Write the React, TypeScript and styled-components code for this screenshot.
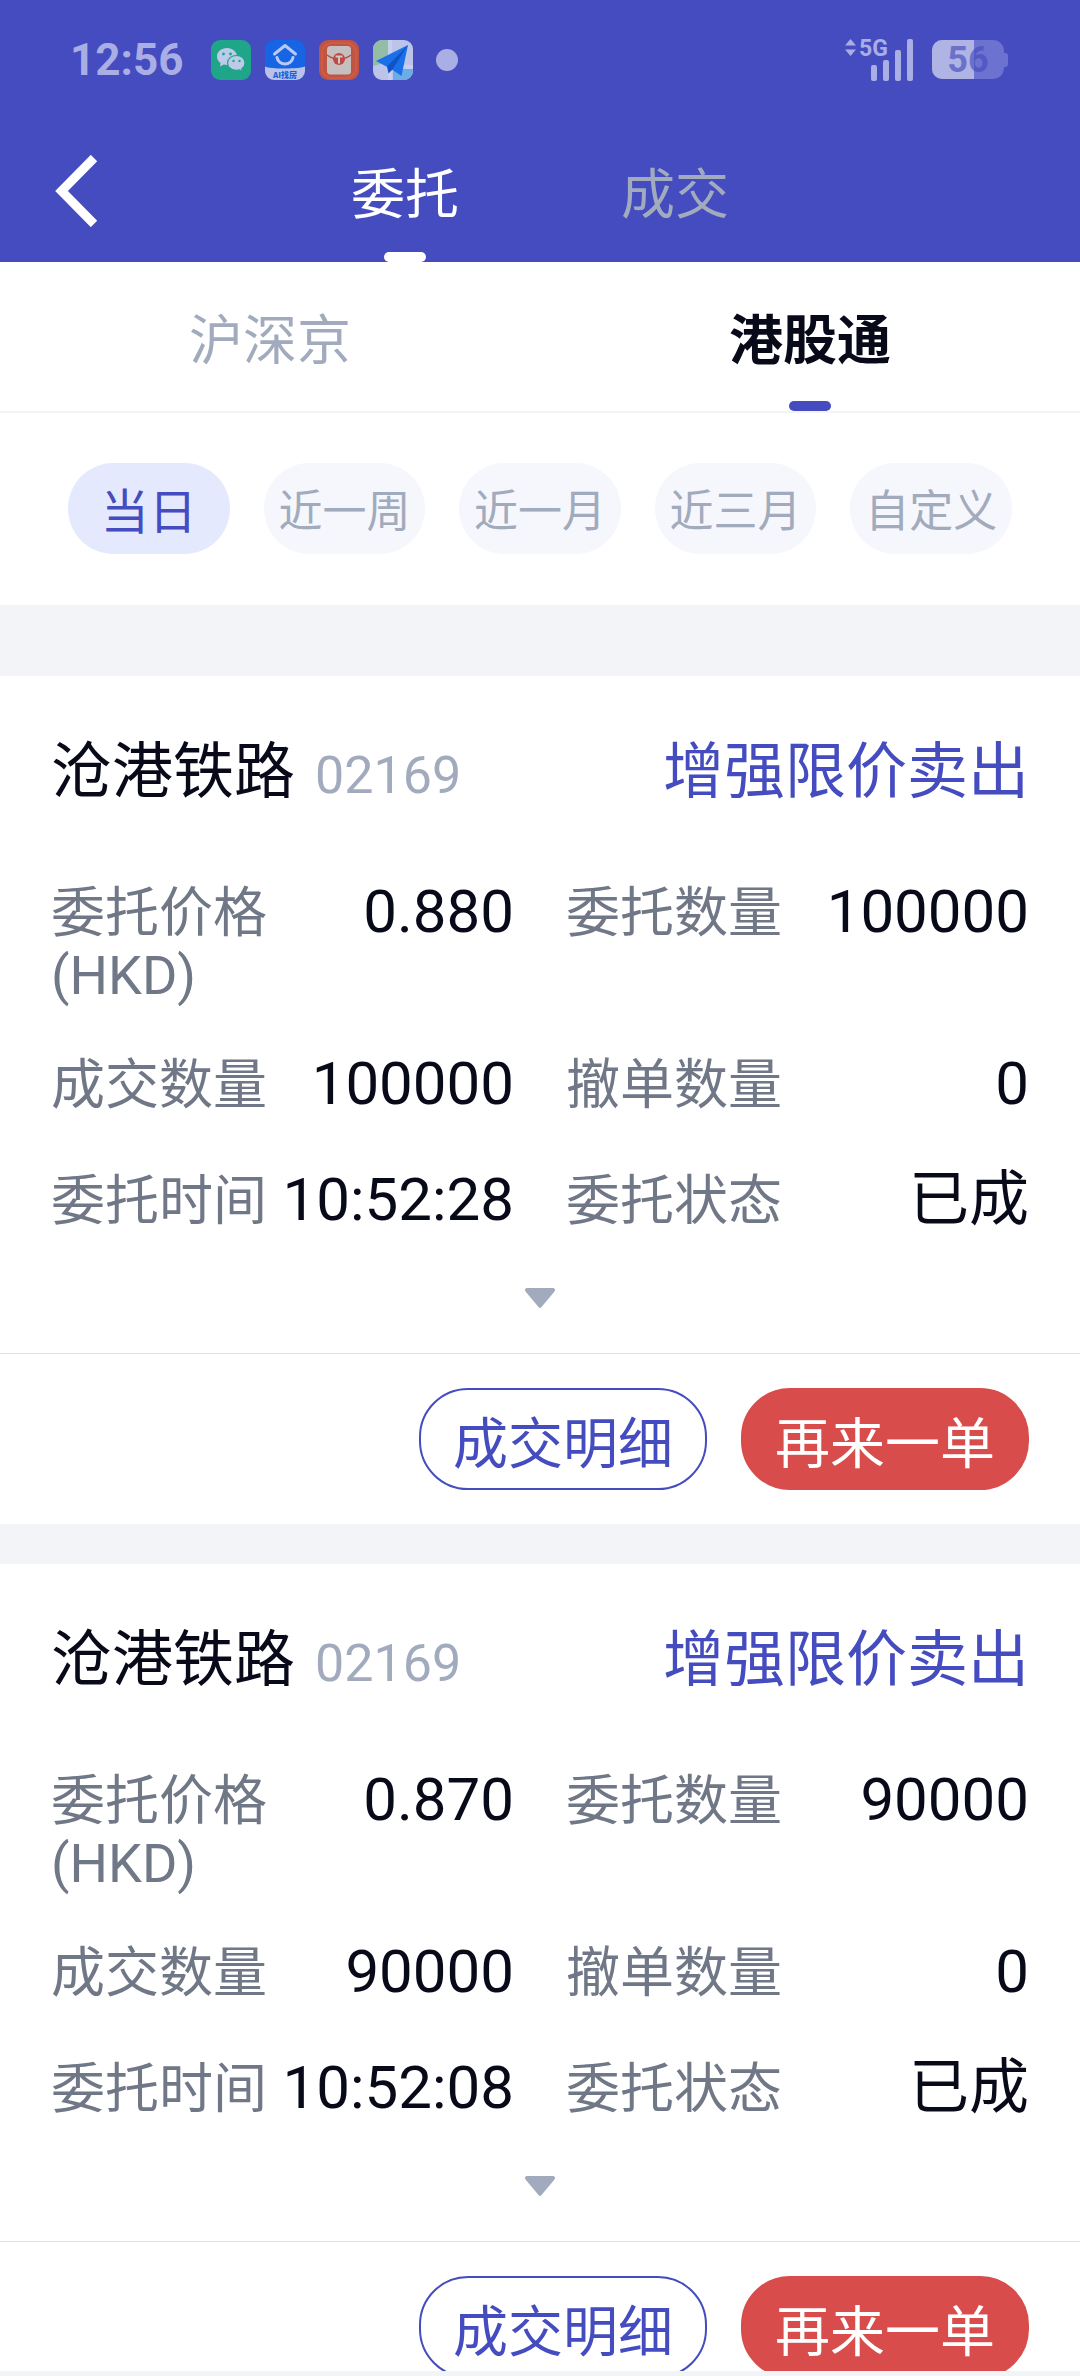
import React, { useState } from "react";
import styled, { createGlobalStyle } from "styled-components";

const cjk = '"Noto Sans CJK SC", "Noto Sans", sans-serif';
const latin = 'Roboto, "Noto Sans CJK SC", sans-serif';

const color = {
  brand: "#444cbf",
  ink: "#080a1a",
  label: "#707786",
  muted: "#a2abbd",
  surface: "#f2f4f7",
  pill: "#f5f7fc",
  pillActive: "#e4e9fe",
  line: "#e1e4e6",
  red: "#d84c4b",
  status: "#a9aee4",
};

const GlobalStyle = createGlobalStyle`
  * { box-sizing: border-box; }
  html, body { margin: 0; padding: 0; }
  body { background: ${color.surface}; font-family: ${cjk}; color: ${color.ink}; }
  button { font: inherit; border: 0; padding: 0; margin: 0; background: none; cursor: pointer; }
  svg { display: block; flex: none; }
`;

const Screen = styled.div`
  display: flex;
  flex-direction: column;
  height: 100vh;
`;

const Header = styled.header`
  flex: none;
  background: ${color.brand};
`;

const StatusBar = styled.div`
  display: flex;
  align-items: center;
  justify-content: space-between;
  height: 120px;
  padding: 0 72px 0 70px;
`;

const StatusGroup = styled.div<{ $gap: number }>`
  display: flex;
  align-items: center;
  gap: ${(p) => p.$gap}px;
`;

const Clock = styled.time`
  margin-right: 14px;
  font: 700 44px/60px ${latin};
  color: ${color.status};
`;

const Dot = styled.span`
  width: 22px;
  height: 22px;
  margin-left: 9px;
  border-radius: 50%;
  background: ${color.status};
`;

const NavBar = styled.nav`
  display: grid;
  grid-template-columns: 1fr 2fr 1fr;
  height: 142px;
`;

const BackButton = styled.button`
  display: flex;
  align-items: center;
  padding-left: 54px;
`;

const Tabs = styled.div`
  display: flex;
`;

const Tab = styled.button<{ $tone: string; $bar: string; $bold?: boolean }>`
  position: relative;
  flex: 1;
  font-size: 54px;
  line-height: 64px;
  font-weight: ${(p) => (p.$bold ? 700 : 400)};
  color: ${(p) => p.$tone};

  &[aria-selected="true"]::after {
    content: "";
    position: absolute;
    left: 50%;
    bottom: 0;
    width: 42px;
    height: 10px;
    margin-left: -21px;
    border-radius: 5px;
    background: ${(p) => p.$bar};
  }
`;

const MarketTabs = styled.div`
  display: flex;
  flex: none;
  height: 151px;
  background: #fff;
  border-bottom: 2px solid ${color.surface};
`;

const Filters = styled.div`
  display: flex;
  flex: none;
  gap: 34px;
  padding: 50px 68px 51px;
  background: #fff;
`;

const Pill = styled.button<{ $active: boolean }>`
  flex: 1;
  height: 91px;
  padding-bottom: 2px;
  border-radius: 46px;
  white-space: nowrap;
  line-height: 64px;
  font-size: ${(p) => (p.$active ? 48 : 44)}px;
  color: ${(p) => (p.$active ? color.brand : color.muted)};
  background: ${(p) => (p.$active ? color.pillActive : color.pill)};
`;

const OrderList = styled.main`
  flex: 1;
  min-height: 0;
  display: flex;
  flex-direction: column;
  gap: 40px;
  padding-top: 71px;
  overflow-y: auto;
  scrollbar-width: none;
`;

const Card = styled.article`
  flex: none;
  background: #fff;
`;

const CardHead = styled.div`
  display: flex;
  align-items: baseline;
  justify-content: space-between;
  height: 138px;
  padding: 46px 51px 0;
`;

const StockName = styled.h2`
  margin: 0;
  font-weight: 400;
  font-size: 61px;
  line-height: 90px;
`;

const StockCode = styled.span`
  margin-left: 20px;
  font-family: ${latin};
  font-size: 52px;
  color: ${color.muted};
`;

const OrderType = styled.span`
  font-size: 61px;
  line-height: 90px;
  color: ${color.brand};
`;

const Fields = styled.dl`
  display: grid;
  grid-template-columns: 1fr 1fr;
  gap: 38px 52px;
  margin: 0;
  padding: 59px 51px 0;
  font-family: ${latin};
`;

const Field = styled.div`
  display: flex;
  align-items: baseline;
  justify-content: space-between;
`;

const FieldName = styled.dt`
  font-size: 54px;
  line-height: 62px;
  color: ${color.label};
`;

const Unit = styled.span`
  display: block;
`;

const FieldValue = styled.dd`
  margin: 0;
  font-size: 60px;
  line-height: 78px;
`;

const Expand = styled.button`
  display: flex;
  justify-content: center;
  width: 100%;
  padding: 49px 0 45px;
`;

const Actions = styled.div`
  display: flex;
  justify-content: flex-end;
  gap: 34px;
  padding: 34px 51px;
  border-top: 1px solid ${color.line};
`;

const Action = styled.button<{ $solid?: boolean }>`
  width: 288px;
  height: 102px;
  border-radius: 49px;
  font-size: 55px;
  line-height: 64px;
  border: 2px solid ${(p) => (p.$solid ? color.red : color.brand)};
  color: ${(p) => (p.$solid ? "#fff" : color.brand)};
  background: ${(p) => (p.$solid ? color.red : "#fff")};
`;

const BottomEdge = styled.footer`
  flex: none;
  height: 5px;
  background: ${color.surface};
`;

const WeChatIcon = () => (
  <svg width="40" height="40" viewBox="0 0 40 40" aria-hidden="true">
    <rect width="40" height="40" rx="9" fill="#1fa587" />
    <path d="M16 8c-5.600 0-10 3.700-10 8.400 0 2.700 1.400 5 3.600 6.500L9 26.500l3.800-2c1 .3 2.100.4 3.200.4 5.500 0 10-3.800 10-8.500S21.500 8 16 8z" fill="#bccbe9" />
    <path d="M25.500 15.500c-5 0-9 3.200-9 7.400s4 7.400 9 7.400c1 0 2-.1 2.900-.4l3 1.700-.6-2.900c2-1.300 3.200-3.400 3.200-5.800 0-4.200-3.800-7.400-8.500-7.400z" fill="#bccbe9" stroke="#1fa587" strokeWidth="1.200" />
    <g fill="#1fa587">
      <circle cx="12.500" cy="14" r="1.400" />
      <circle cx="19.500" cy="14" r="1.400" />
      <circle cx="22.500" cy="21" r="1.200" />
      <circle cx="28.500" cy="21" r="1.200" />
    </g>
  </svg>
);

const HouseIcon = () => (
  <svg width="40" height="40" viewBox="0 0 40 40" aria-hidden="true">
    <rect width="40" height="40" rx="9" fill="#1764e4" />
    <path d="M0 26.500c3 1.500 10 2 20 2s17-.7 20-2V31a9 9 0 0 1-9 9H9a9 9 0 0 1-9-9z" fill="#b9c3ea" />
    <path d="M9.500 14L20 5.500 30.500 14" fill="none" stroke="#b9c9f2" strokeWidth="3" strokeLinecap="round" strokeLinejoin="round" />
    <path d="M12 17.500c1.500 8.500 14.500 8.500 16 0" fill="none" stroke="#b9c9f2" strokeWidth="3" strokeLinecap="round" />
    <text x="20" y="37.500" textAnchor="middle" fontSize="8" fontWeight="900" fill="#1a5fd8" fontFamily="Noto Sans CJK SC, sans-serif">AI找房</text>
  </svg>
);

const EnvelopeIcon = () => (
  <svg width="40" height="40" viewBox="0 0 40 40" aria-hidden="true">
    <rect width="40" height="40" rx="9" fill="#c05445" />
    <rect x="3" y="3" width="34" height="35" rx="10" fill="none" stroke="#cc5c43" strokeWidth="2" />
    <rect x="8" y="6" width="24" height="28.500" rx="3.500" fill="#c6bfbf" />
    <path d="M8 15c4 3 8 4.200 12 4.200S28 18 32 15" fill="none" stroke="#bd4b43" strokeWidth="1.500" />
    <circle cx="20" cy="19" r="6" fill="#bd4b43" />
    <path d="M16.500 16.500h7M20 16.500v7" fill="none" stroke="#d5c4c8" strokeWidth="2" />
  </svg>
);

const MapIcon = () => (
  <svg width="40" height="40" viewBox="0 0 40 40" aria-hidden="true">
    <rect width="40" height="40" rx="9" fill="#bcc4ea" />
    <path d="M9 0h6v22L0 26V9a9 9 0 0 1 9-9z" fill="#94bda6" />
    <path d="M20 29h20v2a9 9 0 0 1-9 9H20z" fill="#6dade6" />
    <path d="M15 0h4v40h-4zM19 24l21 1v4H19z" fill="#c8cef0" />
    <path d="M3 21L35 5 28.500 36 19 29.500z" fill="#1a70ea" />
    <path d="M35 5L14 26.500l1.500 7 4-4z" fill="#1253c4" />
  </svg>
);

const SignalIcon = () => (
  <svg width="70" height="56" viewBox="0 -6 70 56" aria-hidden="true">
    <g fill={color.status}>
      <path d="M0 7.500L5.500 1 11 7.500zM0 11.500h11L5.500 18z" />
      <rect x="26" y="27" width="6" height="16" rx="2" />
      <rect x="38" y="22" width="6" height="21" rx="2" />
      <rect x="50" y="12" width="6" height="31" rx="2" />
      <rect x="62" y="1" width="6" height="42" rx="2" />
      <text x="14" y="18" fontSize="23" fontWeight="700" fontFamily="Roboto, sans-serif">5G</text>
    </g>
  </svg>
);

const BatteryIcon = () => (
  <svg width="76" height="40" viewBox="0 0 76 40" role="img" aria-label="56%">
    <defs>
      <linearGradient id="level" gradientUnits="userSpaceOnUse" x1="0" y1="0" x2="76" y2="0">
        <stop offset="0.553" stopColor="#6b71c9" />
        <stop offset="0.553" stopColor="#5159c5" />
      </linearGradient>
    </defs>
    <path d="M10 0h51a11 11 0 0 1 11 11v2h1a3 3 0 0 1 3 3v8a3 3 0 0 1-3 3h-1v2a11 11 0 0 1-11 10H10A10 10 0 0 1 0 29V10A10 10 0 0 1 10 0z" fill="#6b72cf" />
    <path d="M10 0h32v39H10A10 10 0 0 1 0 29V10A10 10 0 0 1 10 0z" fill="#afb4e5" />
    <text x="36" y="32" textAnchor="middle" fontSize="36" fontWeight="700" fill="url(#level)" fontFamily="Roboto, sans-serif">56</text>
  </svg>
);

const BackIcon = () => (
  <svg width="44" height="72" viewBox="0 0 44 72" aria-hidden="true">
    <path d="M40 3L7.500 36 40 69" fill="none" stroke="#fff" strokeWidth="9" />
  </svg>
);

const CaretIcon = () => (
  <svg width="30" height="20" viewBox="0 0 30 20" aria-hidden="true">
    <path d="M2 0h26c2 0 2.500 2 1.500 3.500L16.500 19c-1 1.200-2 1.200-3 0L.5 3.500C-.5 2 0 0 2 0z" fill={color.muted} />
  </svg>
);

type Entry = { name: string; unit?: string; value: string };
type Order = { id: string; stock: string; code: string; type: string; entries: Entry[] };

const makeOrder = (id: string, price: string, amount: string, time: string): Order => ({
  id,
  stock: "沧港铁路",
  code: "02169",
  type: "增强限价卖出",
  entries: [
    { name: "委托价格", unit: "(HKD)", value: price },
    { name: "委托数量", value: amount },
    { name: "成交数量", value: amount },
    { name: "撤单数量", value: "0" },
    { name: "委托时间", value: time },
    { name: "委托状态", value: "已成" },
  ],
});

const orders = [
  makeOrder("a", "0.880", "100000", "10:52:28"),
  makeOrder("b", "0.870", "90000", "10:52:08"),
];

const OrderCard = ({ order }: { order: Order }) => (
  <Card>
    <CardHead>
      <StockName>
        {order.stock}
        <StockCode>{order.code}</StockCode>
      </StockName>
      <OrderType>{order.type}</OrderType>
    </CardHead>
    <Fields>
      {order.entries.map((e) => (
        <Field key={e.name}>
          <FieldName>
            {e.name}
            {e.unit && <Unit>{e.unit}</Unit>}
          </FieldName>
          <FieldValue>{e.value}</FieldValue>
        </Field>
      ))}
    </Fields>
    <Expand type="button" aria-label="展开">
      <CaretIcon />
    </Expand>
    <Actions>
      <Action type="button">成交明细</Action>
      <Action type="button" $solid>再来一单</Action>
    </Actions>
  </Card>
);

const views = ["委托", "成交"];
const markets = ["沪深京", "港股通"];
const ranges = ["当日", "近一周", "近一月", "近三月", "自定义"];

export default function App() {
  const [view, setView] = useState("委托");
  const [market, setMarket] = useState("港股通");
  const [range, setRange] = useState("当日");

  return (
    <Screen>
      <GlobalStyle />
      <Header>
        <StatusBar>
          <StatusGroup $gap={14}>
            <Clock>12:56</Clock>
            <WeChatIcon />
            <HouseIcon />
            <EnvelopeIcon />
            <MapIcon />
            <Dot />
          </StatusGroup>
          <StatusGroup $gap={17}>
            <SignalIcon />
            <BatteryIcon />
          </StatusGroup>
        </StatusBar>
        <NavBar>
          <BackButton type="button" aria-label="返回">
            <BackIcon />
          </BackButton>
          <Tabs role="tablist">
            {views.map((v) => (
              <Tab
                key={v}
                type="button"
                role="tab"
                aria-selected={v === view}
                $tone={v === view ? "#fff" : color.muted}
                $bar="#fff"
                onClick={() => setView(v)}
              >
                {v}
              </Tab>
            ))}
          </Tabs>
        </NavBar>
      </Header>
      <MarketTabs role="tablist">
        {markets.map((m) => (
          <Tab
            key={m}
            type="button"
            role="tab"
            aria-selected={m === market}
            $tone={m === market ? color.ink : color.muted}
            $bar={color.brand}
            $bold={m === market}
            onClick={() => setMarket(m)}
          >
            {m}
          </Tab>
        ))}
      </MarketTabs>
      <Filters>
        {ranges.map((r) => (
          <Pill key={r} type="button" $active={r === range} aria-pressed={r === range} onClick={() => setRange(r)}>
            {r}
          </Pill>
        ))}
      </Filters>
      <OrderList>
        {orders.map((o) => (
          <OrderCard key={o.id} order={o} />
        ))}
      </OrderList>
      <BottomEdge />
    </Screen>
  );
}
